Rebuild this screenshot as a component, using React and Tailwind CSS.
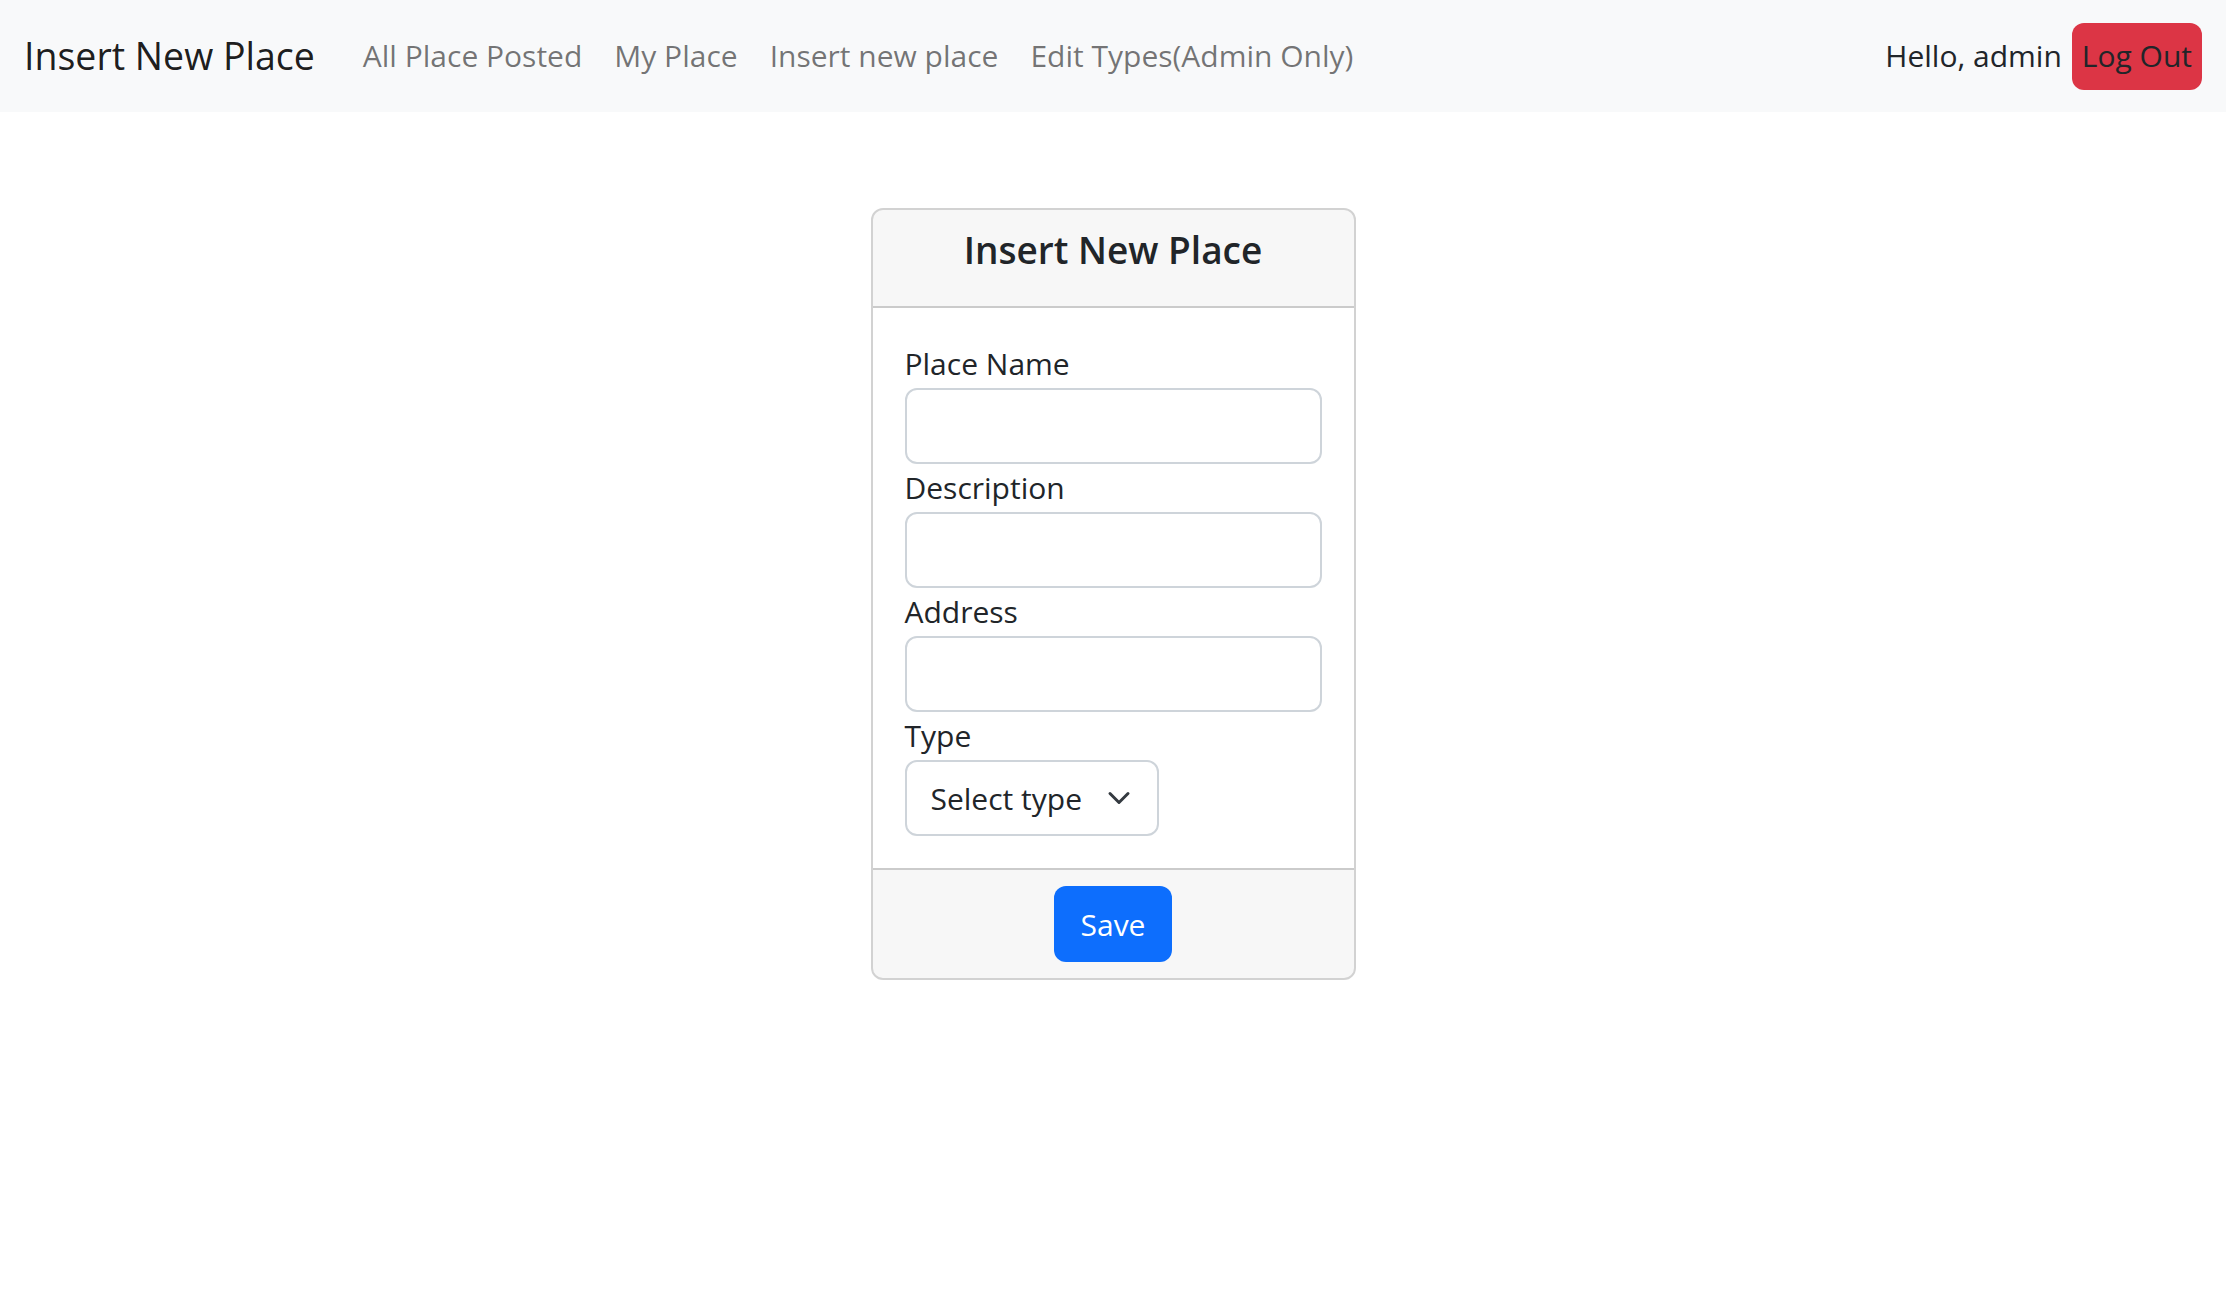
import React from "react";

const font = { fontFamily: '"Open Sans", "Noto Sans", sans-serif' };

const Field = ({ label }) => (
  <div>
    <label className="block text-[30px] leading-[48px] text-[#212529]">{label}</label>
    <input
      type="text"
      className="block w-full h-[76px] px-[24px] border-2 border-[#ced4da] rounded-[12px] bg-white text-[30px] outline-none"
    />
  </div>
);

export default function App() {
  return (
    <div className="min-h-screen bg-white text-[#212529]" style={font}>
      {/* Navbar */}
      <nav className="h-[112px] bg-[#f8f9fa] px-[24px] flex items-center justify-between">
        <div className="flex items-center">
          <a href="#" className="mr-[32px] text-[37.5px] leading-[60px] text-black/90">
            Insert New Place
          </a>
          <a href="#" className="px-[16px] text-[30px] leading-[48px] text-black/55">
            All Place Posted
          </a>
          <a href="#" className="px-[16px] text-[30px] leading-[48px] text-black/55">
            My Place
          </a>
          <a href="#" className="px-[16px] text-[30px] leading-[48px] text-black/55">
            Insert new place
          </a>
          <a href="#" className="px-[16px] text-[30px] leading-[48px] text-black/55">
            Edit Types(Admin Only)
          </a>
        </div>
        <div className="flex items-center">
          <span className="text-[30px] leading-[48px] text-[#212529]">Hello, admin</span>
          <button
            type="button"
            className="ml-[10px] h-[67px] px-[10px] rounded-[12px] bg-[#dc3545] text-[30px] leading-[48px] text-[#212529]"
          >
            Log Out
          </button>
        </div>
      </nav>

      {/* Card */}
      <div className="mt-[96px] mx-auto w-[485px] border-2 border-black/[0.175] rounded-[12px] overflow-hidden">
        <div className="bg-black/[0.03] px-[32px] py-[16px] border-b-2 border-black/[0.175]">
          <h5 className="mb-[16px] text-center text-[37px] leading-[48px] font-semibold text-[#212529]">
            Insert New Place
          </h5>
        </div>

        <div className="p-[32px]">
          <Field label="Place Name" />
          <Field label="Description" />
          <Field label="Address" />
          <div>
            <label className="block text-[30px] leading-[48px] text-[#212529]">Type</label>
            <div className="relative w-[254px]">
              <select
                className="block w-full h-[76px] pl-[24px] pr-[64px] border-2 border-[#ced4da] rounded-[12px] bg-white text-[30px] text-[#212529] appearance-none outline-none"
                defaultValue=""
              >
                <option value="">Select type</option>
              </select>
              <svg
                className="pointer-events-none absolute right-[24px] top-1/2 -translate-y-1/2 w-[32px] h-[24px]"
                viewBox="0 0 16 16"
                fill="none"
                stroke="#343a40"
                strokeWidth="2"
                strokeLinecap="round"
                strokeLinejoin="round"
              >
                <path d="m2 5 6 6 6-6" />
              </svg>
            </div>
          </div>
        </div>

        <div className="bg-black/[0.03] py-[16px] border-t-2 border-black/[0.175] flex justify-center">
          <button
            type="button"
            className="w-[118px] h-[76px] rounded-[12px] bg-[#0d6efd] text-white text-[30px]"
          >
            Save
          </button>
        </div>
      </div>
    </div>
  );
}
